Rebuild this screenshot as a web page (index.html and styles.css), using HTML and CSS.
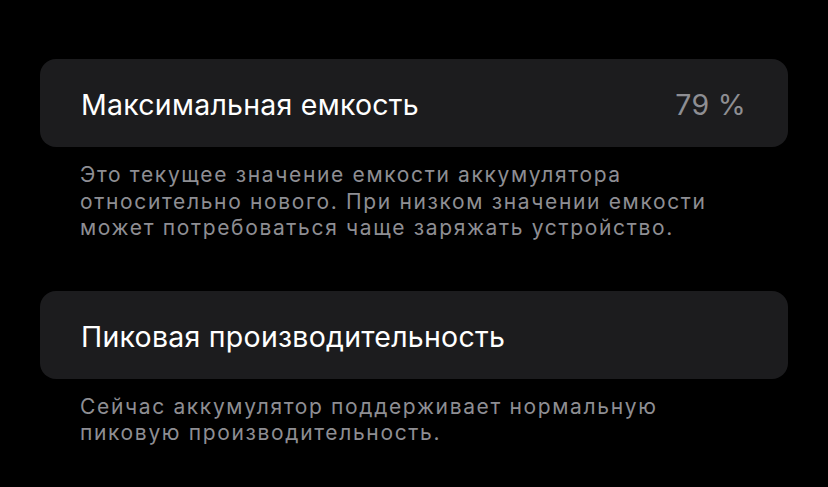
FILE: index.html
```html
<!DOCTYPE html>
<html lang="ru">
<head>
  <meta charset="UTF-8">
  <meta name="viewport" content="width=device-width, initial-scale=1.0">
  <title>Аккумулятор</title>
  <link rel="stylesheet" href="styles.css">
</head>
<body>
  <div class="container">
    <div class="group">
      <div class="cell">
        <span class="cell-title">Максимальная емкость</span>
        <span class="cell-value">79 %</span>
      </div>
      <p class="footer">Это текущее значение емкости аккумулятора<br>относительно нового. При низком значении емкости<br>может потребоваться чаще заряжать устройство.</p>
    </div>

    <div class="group">
      <div class="cell">
        <span class="cell-title">Пиковая производительность</span>
      </div>
      <p class="footer">Сейчас аккумулятор поддерживает нормальную<br>пиковую производительность.</p>
    </div>
  </div>
</body>
</html>
```

FILE: styles.css
```css
body {
  margin: 0;
  padding: 0;
  background-color: #000;
  font-family: Inter, "Noto Sans", sans-serif;
  -webkit-font-smoothing: antialiased;
}

.container {
  padding: 59px 40px 0;
}

.group {
  margin-bottom: 49px;
}

.cell {
  display: flex;
  align-items: center;
  justify-content: space-between;
  height: 88px;
  padding: 3px 42px 0 41px;
  box-sizing: border-box;
  background-color: #1c1c1e;
  border-radius: 16px;
}

.cell-title {
  font-size: 28.5px;
  letter-spacing: 0.25px;
  color: #fff;
}

.cell-value {
  font-size: 28.5px;
  letter-spacing: 0.3px;
  color: #8e8e93;
}

.footer {
  margin: 15px 0 0;
  padding: 0 40px;
  font-size: 21px;
  line-height: 26.5px;
  letter-spacing: 1.65px;
  color: #8e8e93;
}
```
